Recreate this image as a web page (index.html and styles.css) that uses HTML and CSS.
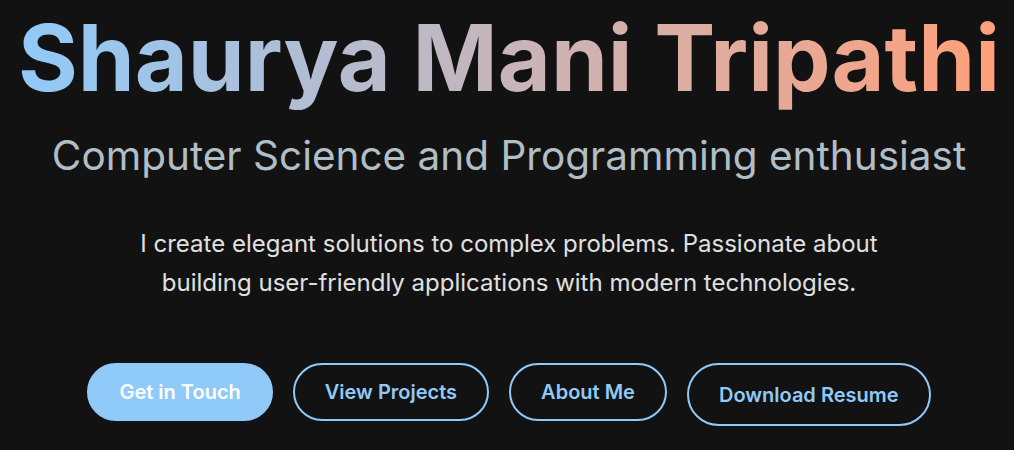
FILE: index.html
```html
<!DOCTYPE html>
<html lang="en">
<head>
<meta charset="utf-8">
<title>Shaurya Mani Tripathi</title>
<link rel="stylesheet" href="styles.css">
</head>
<body>
<section class="hero">
  <h1 class="name">Shaurya Mani Tripathi</h1>
  <h2 class="tagline">Computer Science and Programming enthusiast</h2>
  <p class="intro">I create elegant solutions to complex problems. Passionate about building user-friendly applications with modern technologies.</p>
  <div class="actions">
    <a class="btn btn-primary" href="#contact">Get in Touch</a>
    <a class="btn" href="#projects">View Projects</a>
    <a class="btn" href="#about">About Me</a>
    <a class="btn btn-resume" href="#resume">Download Resume</a>
  </div>
</section>
</body>
</html>
```
FILE: styles.css
```css
html, body {
  margin: 0;
  padding: 0;
  background: #121212;
}
body {
  font-family: Inter, "Noto Sans", sans-serif;
  color: #e0e0e0;
}
.hero {
  display: flex;
  flex-direction: column;
  align-items: center;
  text-align: center;
  padding-left: 4px;
}
.name {
  margin: 3px 0 0;
  font-size: 91.5px;
  font-weight: 700;
  line-height: 110px;
  letter-spacing: 0;
  background: linear-gradient(90deg, #90caf9, #ffa07a);
  -webkit-background-clip: text;
  background-clip: text;
  color: transparent;
}
.tagline {
  margin: 19px 0 0;
  font-size: 40.5px;
  font-weight: 400;
  color: #b0bec5;
  line-height: 48px;
}
.intro {
  margin: 44px 0 0;
  max-width: 800px;
  font-size: 24px;
  line-height: 39px;
  color: #e0e0e0;
}
.actions {
  display: flex;
  gap: 20px;
  margin-top: 61px;
  align-items: flex-start;
}
.btn {
  display: inline-block;
  padding: 15px 30px;
  border: 2px solid #90caf9;
  border-radius: 999px;
  color: #90caf9;
  font-size: 20px;
  font-weight: 600;
  line-height: 24px;
  text-decoration: none;
}
.btn-primary {
  background: #90caf9;
  color: #ffffff;
}
.btn-resume {
  padding-top: 18px;
  padding-bottom: 17px;
}
```
